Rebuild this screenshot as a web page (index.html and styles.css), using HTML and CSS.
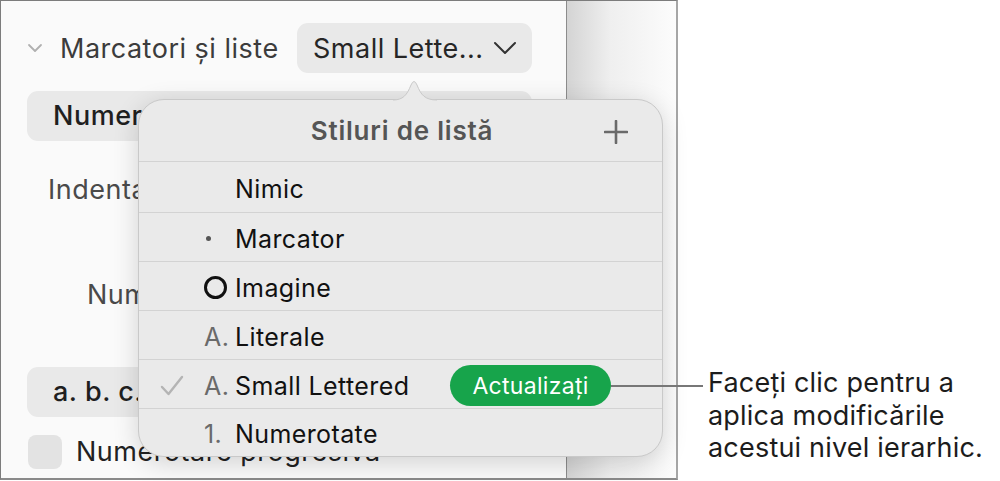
FILE: index.html
```html
<!DOCTYPE html>
<html lang="ro">
<head>
    <meta charset="UTF-8">
    <title>Marcatori și liste</title>
    <link rel="stylesheet" href="styles.css">
</head>
<body>
    <div class="stage">
        <div class="frame">
            <aside class="sidebar">
                <div class="section-head">
                    <svg class="disclosure" width="16" height="10" viewBox="0 0 16 10">
                        <path d="M2 2 L8 8 L14 2" fill="none" stroke="#b0b0b0" stroke-width="1.8" stroke-linecap="round" stroke-linejoin="round"/>
                    </svg>
                    <span class="section-title">Marcatori și liste</span>
                    <button class="popup-btn">
                        <span>Small Lette...</span>
                        <svg width="26" height="16" viewBox="0 0 26 16">
                            <path d="M3 3 L13 13 L23 3" fill="none" stroke="#333" stroke-width="2" stroke-linecap="round" stroke-linejoin="round"/>
                        </svg>
                    </button>
                </div>

                <div class="field-box field-type">Numerotate</div>

                <div class="field-label label-indent">Indentare marcator:</div>
                <div class="field-label label-num">Numerotare:</div>

                <div class="field-box field-format">a. b. c.</div>

                <label class="check-row">
                    <span class="checkbox"></span>
                    <span>Numerotare progresivă</span>
                </label>
            </aside>
            <div class="canvas"></div>
        </div>

        <!-- list styles popover -->
        <div class="popover">
            <svg class="popover-arrow" width="44" height="24" viewBox="0 0 44 24">
                <path d="M0 23 C10 23 14 18 18 8 Q21 1 24 8 C28 18 32 23 44 23" fill="#eaeaea" stroke="#c9c9c9" stroke-width="1"/>
            </svg>
            <div class="popover-head">
                <span class="popover-title">Stiluri de listă</span>
                <svg class="add-btn" width="24" height="24" viewBox="0 0 24 24">
                    <path d="M12 1 V23 M1 12 H23" stroke="#6a6a6a" stroke-width="2.6" stroke-linecap="round"/>
                </svg>
            </div>
            <ul class="style-list">
                <li class="style-row first">
                    <span class="check"></span>
                    <span class="marker"></span>
                    <span class="name">Nimic</span>
                </li>
                <li class="style-row">
                    <span class="check"></span>
                    <span class="marker"><span class="dot"></span></span>
                    <span class="name">Marcator</span>
                </li>
                <li class="style-row">
                    <span class="check"></span>
                    <span class="marker"><span class="ring"></span></span>
                    <span class="name">Imagine</span>
                </li>
                <li class="style-row">
                    <span class="check"></span>
                    <span class="marker">A.</span>
                    <span class="name">Literale</span>
                </li>
                <li class="style-row">
                    <span class="check">
                        <svg width="24" height="22" viewBox="0 0 24 22">
                            <path d="M2 12 L8.5 19 L22 2" fill="none" stroke="#b4b4b4" stroke-width="2.4" stroke-linecap="round" stroke-linejoin="round"/>
                        </svg>
                    </span>
                    <span class="marker">A.</span>
                    <span class="name">Small Lettered</span>
                    <button class="update-btn">Actualizați</button>
                </li>
                <li class="style-row">
                    <span class="check"></span>
                    <span class="marker">1.</span>
                    <span class="name">Numerotate</span>
                </li>
            </ul>
        </div>

        <!-- callout for the update button -->
        <div class="callout">
            <span class="callout-line"></span>
            <p class="callout-text">Faceți clic pentru a<br>aplica modificările<br>acestui nivel ierarhic.</p>
        </div>
    </div>
</body>
</html>
```

FILE: styles.css
```css
body {
    margin: 0;
    background: #fff;
    font-family: Inter, "Noto Sans", sans-serif;
    color: #222;
}

.stage {
    position: relative;
    width: 1000px;
    height: 481px;
    overflow: hidden;
}

/* Inspector window */
.frame {
    display: flex;
    width: 675px;
    height: 477px;
    border: 1px solid #7c7c7c;
    border-right: 2px solid #a6a6a6;
    border-bottom: 2px solid #8a8a8a;
}

.sidebar {
    width: 566px;
    box-sizing: border-box;
    padding: 0 34px 0 26px;
    background: #fafafa;
    border-right: 1px solid #8c8c8c;
    font-size: 27px;
    letter-spacing: 0.5px;
    white-space: nowrap;
    overflow: hidden;
}

.canvas {
    flex: 1;
    background: linear-gradient(to right, #d4d4d4, #efefef 40%, #fcfcfc);
}

.section-head {
    display: flex;
    align-items: center;
    height: 50px;
    margin-top: 22px;
}

.disclosure {
    margin-right: 17px;
}

.section-title {
    color: #3c3c3c;
}

.popup-btn {
    display: flex;
    align-items: center;
    gap: 8px;
    margin-left: auto;
    height: 50px;
    width: 235px;
    padding: 0 14px 0 16px;
    border: none;
    border-radius: 11px;
    background: #e9e9e9;
    font: inherit;
    letter-spacing: inherit;
    color: #262626;
}

.field-box {
    height: 50px;
    padding-left: 26px;
    border-radius: 11px;
    background: #e9e9e9;
    line-height: 50px;
    font-weight: 500;
    color: #1f1f1f;
}

.field-type {
    margin-top: 18px;
}

.field-label {
    line-height: 30px;
    color: #4a4a4a;
}

.label-indent {
    margin: 34px 0 0 21px;
}

.label-num {
    margin: 75px 0 0 60px;
}

.field-format {
    margin-top: 57px;
}

.check-row {
    display: flex;
    align-items: center;
    gap: 14px;
    margin-top: 16px;
    line-height: 38px;
    color: #222;
}

.checkbox {
    width: 34px;
    height: 34px;
    border-radius: 8px;
    background: #e3e3e3;
    margin-left: 1px;
}

/* Popover */
.popover {
    position: absolute;
    left: 138px;
    top: 99px;
    width: 525px;
    height: 358px;
    box-sizing: border-box;
    background: #eaeaea;
    border: 1px solid #c9c9c9;
    border-radius: 26px;
    box-shadow: 0 6px 26px rgba(0, 0, 0, 0.16);
    font-size: 25px;
    letter-spacing: 0.4px;
}

.popover-arrow {
    position: absolute;
    left: 254px;
    top: -23px;
}

.popover-head {
    position: relative;
    height: 61px;
    display: flex;
    align-items: center;
    justify-content: center;
    border-bottom: 1px solid #d3d3d3;
}

.popover-title {
    font-size: 26px;
    letter-spacing: 0.8px;
    font-weight: 600;
    color: #555;
    margin-left: 3px;
}

.add-btn {
    position: absolute;
    right: 34px;
    top: 20px;
}

.style-list {
    list-style: none;
    margin: 0;
    padding: 0;
}

.style-row {
    display: flex;
    align-items: center;
    box-sizing: border-box;
    height: 49px;
    padding: 3px 0 0 21px;
    border-bottom: 1px solid #d3d3d3;
    color: #111;
}

.style-row.first {
    height: 51px;
    padding-top: 4px;
}

.style-row:last-child {
    height: 47px;
    border-bottom: none;
}

.check {
    display: flex;
    width: 44px;
}

.marker {
    display: flex;
    align-items: center;
    width: 31px;
    color: #6a6a6a;
}

.dot {
    width: 5px;
    height: 5px;
    margin-left: 2px;
    border-radius: 50%;
    background: #555;
}

.ring {
    width: 17px;
    height: 17px;
    border: 3px solid #111;
    border-radius: 50%;
}

.update-btn {
    margin-left: auto;
    margin-right: 51px;
    height: 41px;
    width: 161px;
    padding: 0;
    border: none;
    border-radius: 21px;
    background: #17a44b;
    color: #fff;
    font: inherit;
    font-size: 23px;
    letter-spacing: 0.3px;
}

/* Callout */
.callout {
    position: absolute;
    left: 611px;
    top: 367px;
    display: flex;
    align-items: flex-start;
}

.callout-line {
    width: 92px;
    height: 2px;
    margin-top: 18px;
    background: #777;
}

.callout-text {
    margin: 0 0 0 5px;
    font-size: 27px;
    letter-spacing: 0.2px;
    line-height: 32.5px;
    color: #1c1c1c;
}
```
